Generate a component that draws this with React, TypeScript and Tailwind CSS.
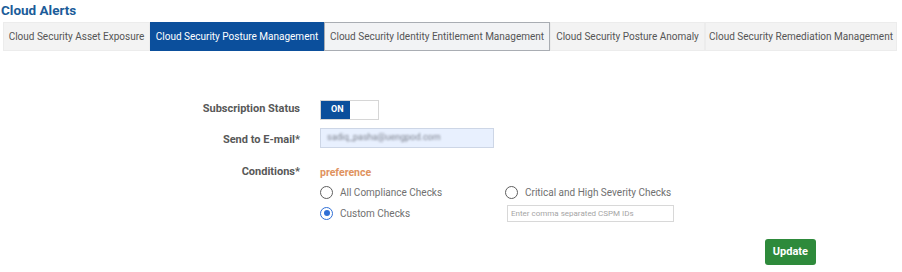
import React, { useState } from "react";

const tabs = [
  { label: "Cloud Security Asset Exposure", w: "w-[147px]" },
  { label: "Cloud Security Posture Management", w: "w-[174px]" },
  { label: "Cloud Security Identity Entitlement Management", w: "w-[226px]" },
  { label: "Cloud Security Posture Anomaly", w: "w-[155px]" },
  { label: "Cloud Security Remediation Management", w: "w-[192px]" },
];

function Radio({ checked, label }: { checked?: boolean; label: string }) {
  return (
    <label className="flex items-center gap-[7px] h-[20px] text-[10px] text-[#707070]">
      <span
        className={
          "flex items-center justify-center w-[13px] h-[13px] rounded-full border-[1.5px] " +
          (checked ? "border-[#2f6fd6]" : "border-[#5e5e5e]")
        }
      >
        {checked && <span className="w-[6px] h-[6px] rounded-full bg-[#2f6fd6]" />}
      </span>
      {label}
    </label>
  );
}

export default function App() {
  const [active] = useState(1);

  return (
    <div className="w-[902px] h-[272px] bg-white font-['Roboto','Liberation_Sans',sans-serif] overflow-hidden">
      <h1 className="pl-[1px] pt-[2px] text-[13.5px] leading-[16px] font-bold text-[#1b5c99]">Cloud Alerts</h1>

      {/* Tabs */}
      <div className="flex ml-[3px] mt-[4px] h-[29px]">
        {tabs.map((t, i) => (
          <div
            key={t.label}
            className={
              "flex items-center justify-center text-[10px] whitespace-nowrap border " +
              t.w +
              " " +
              (i === active
                ? "bg-[#0b4f9c] text-white border-[#0b4f9c]"
                : i === 2
                ? "bg-[#f2f3f5] text-[#555] border-[#a9adb3]"
                : "bg-[#f3f3f3] text-[#555] border-[#ececec]")
            }
          >
            {t.label}
          </div>
        ))}
      </div>

      {/* Form */}
      <div className="grid grid-cols-[300px_1fr] gap-x-[20px] mt-[48px] text-[11px]">
        <div className="flex items-center justify-end h-[21px] font-bold text-[#585858]">Subscription Status</div>
        <div className="flex items-center h-[21px]">
          <div className="flex h-[20px] w-[59px] border border-[#d6d6d6]">
            <span className="flex items-center pl-[10px] w-[29px] bg-[#0b4f9c] text-white text-[9px] font-bold">ON</span>
            <span className="flex-1 bg-white" />
          </div>
        </div>

        <div className="flex items-start justify-end h-[34px] pt-[4px] font-bold text-[#585858] mt-[8px]">Send to E-mail*</div>
        <div className="mt-[8px]">
          <div className="flex items-center w-[174px] h-[20px] px-[6px] bg-[#e8f0fe] border border-[#cdd6e6]">
            <span className="text-[9px] text-[#7a7f8c] blur-[1px]">sadiq_pasha@uengpod.com</span>
          </div>
        </div>

        <div className="flex justify-end font-bold text-[#585858] pt-[2px]">Conditions*</div>
        <div>
          <div className="h-[17px] flex items-center font-bold text-[10.5px] text-[#e0925e] mt-[2px]">preference</div>
          <div className="grid grid-cols-[185px_1fr] mt-[1px]">
            <Radio label="All Compliance Checks" />
            <Radio label="Critical and High Severity Checks" />
            <div className="pt-[1px]">
              <Radio checked label="Custom Checks" />
            </div>
            <div className="pt-[3px] pl-[2px]">
              <input
                className="w-[167px] h-[17px] px-[3px] border border-[#d8d8d8] text-[8px] text-[#999] placeholder:text-[#a5a5a5] outline-none"
                placeholder="Enter comma separated CSPM IDs"
              />
            </div>
          </div>
        </div>
      </div>

      <div className="flex justify-end pr-[86px] mt-[16px]">
        <button className="h-[26px] px-[8px] rounded-[3px] bg-[#2e8a3b] text-white text-[11px] font-bold">Update</button>
      </div>
    </div>
  );
}
